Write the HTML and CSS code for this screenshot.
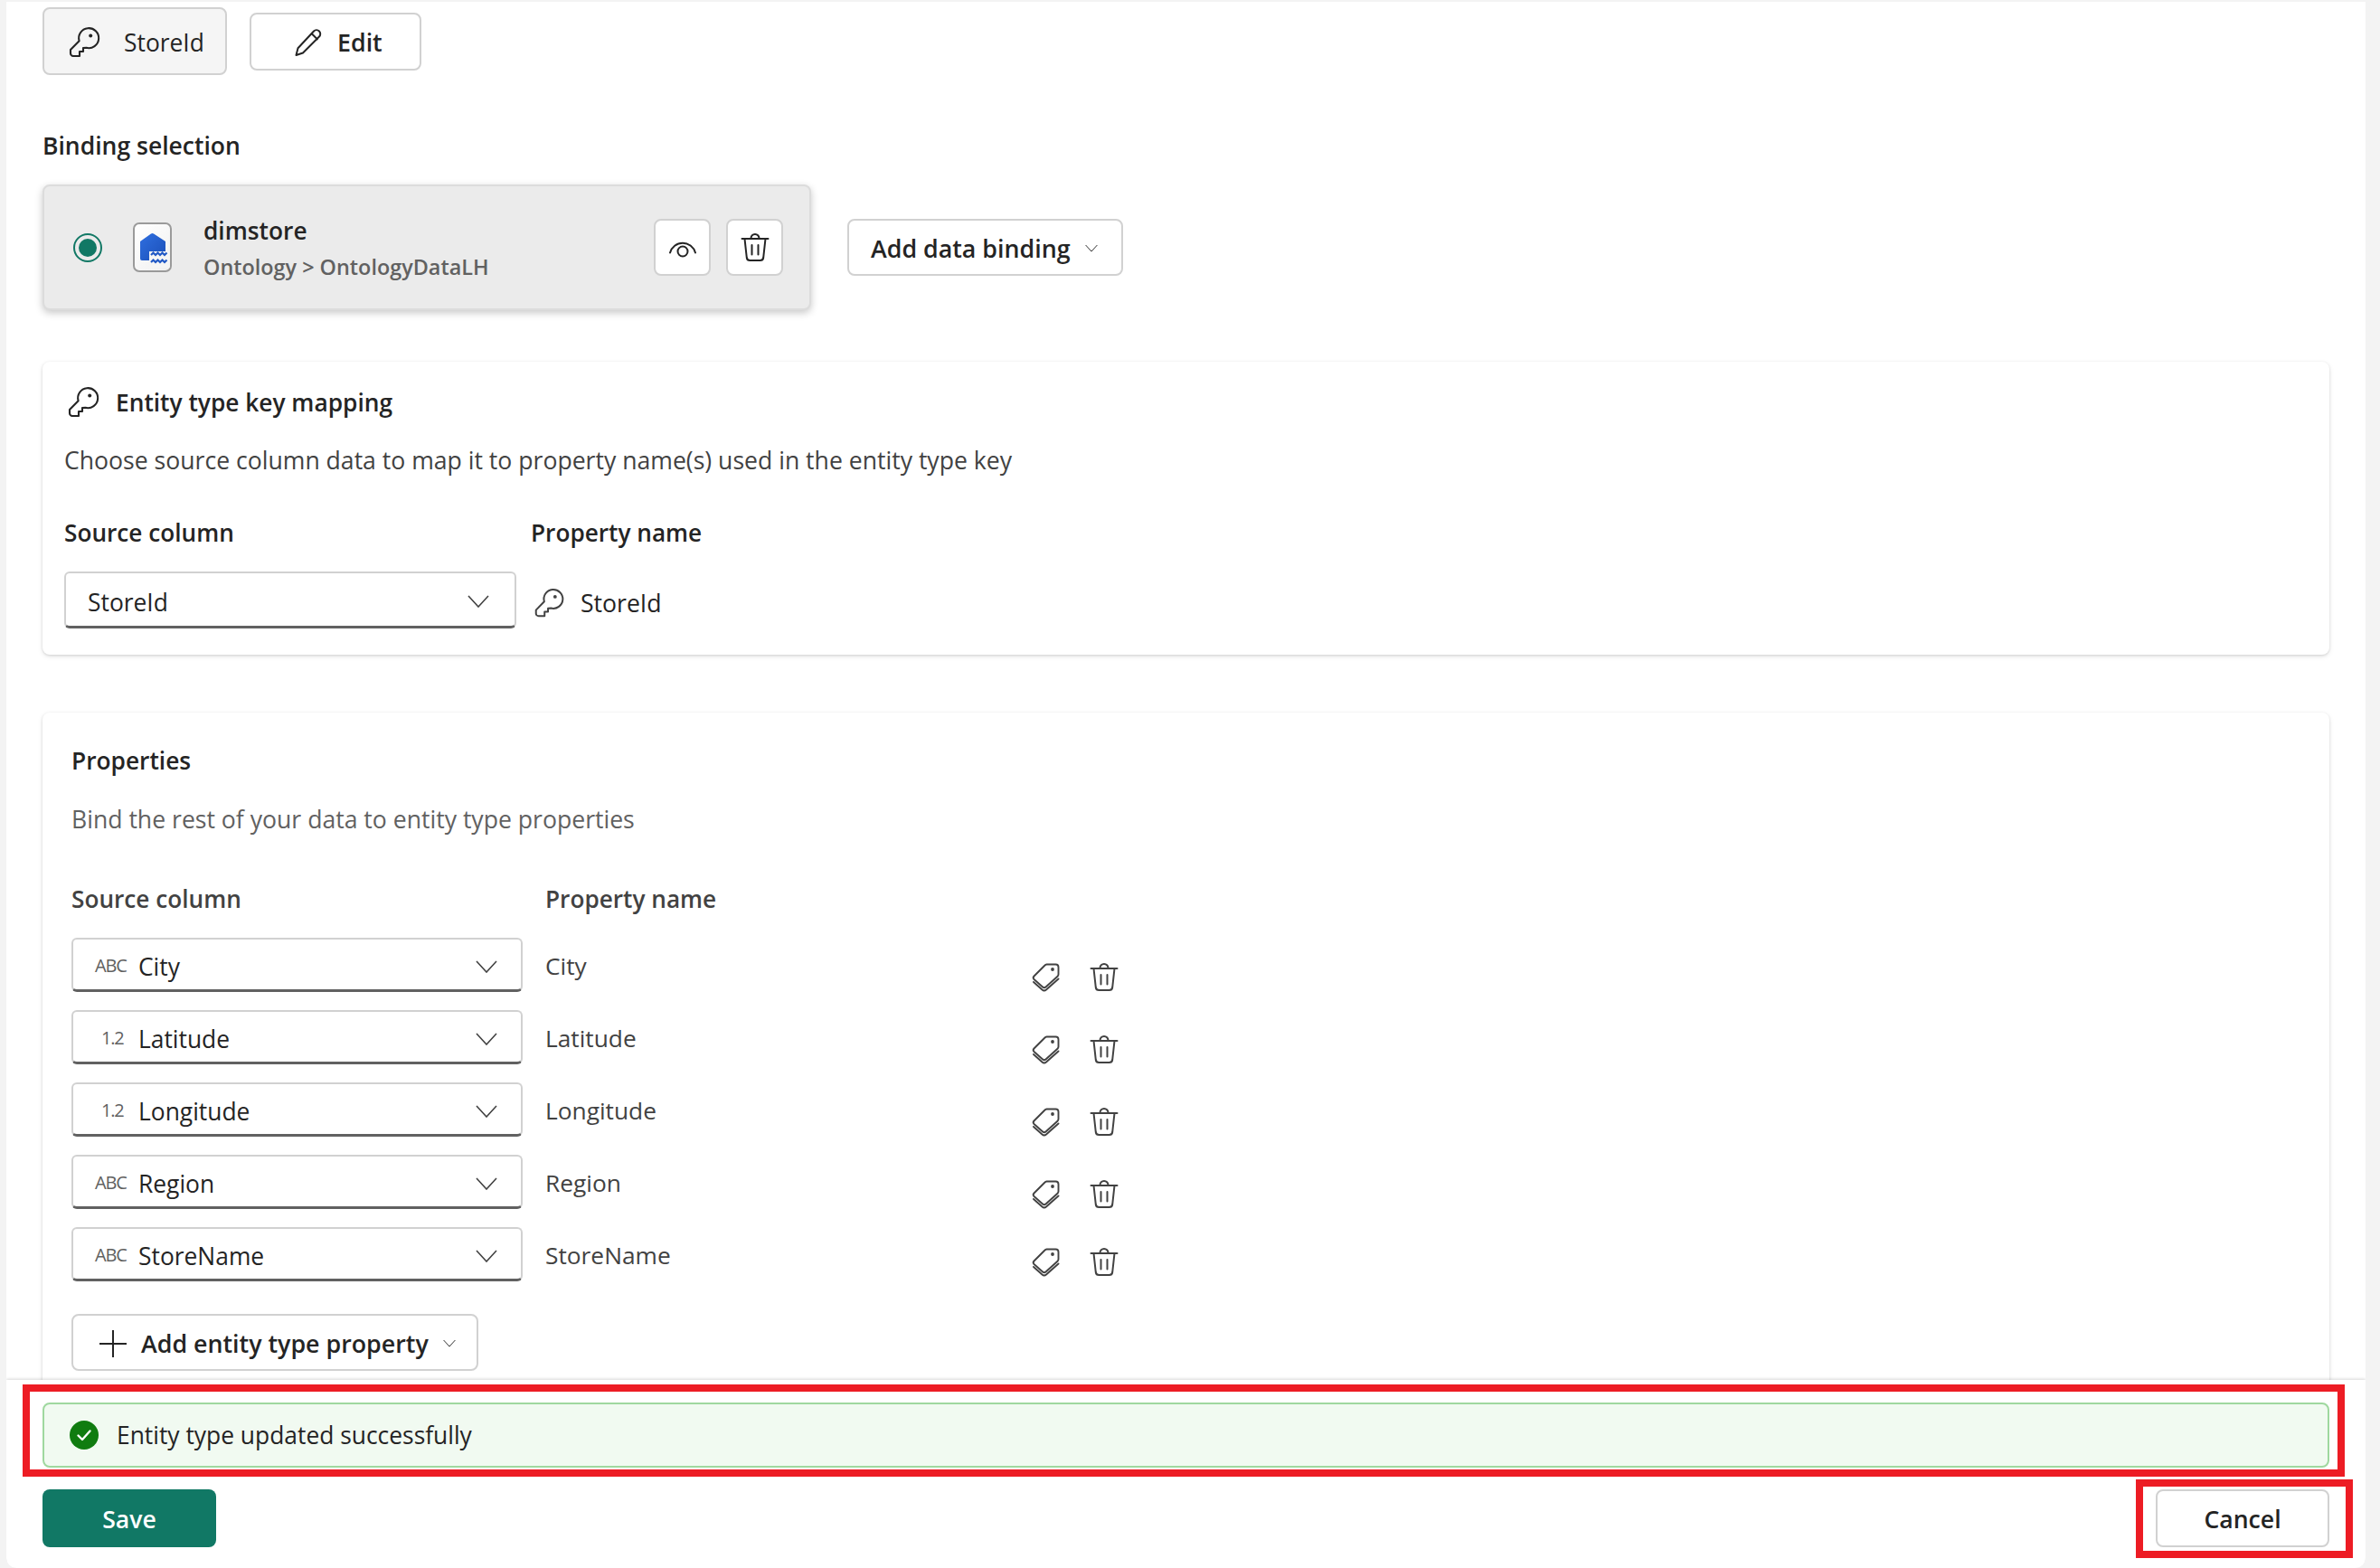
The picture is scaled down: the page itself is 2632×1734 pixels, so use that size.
FILE: index.html
```html
<!DOCTYPE html>
<html lang="en">
<head>
<meta charset="utf-8">
<title>Entity type binding</title>
<link rel="stylesheet" href="styles.css">
</head>
<body>
<svg class="defs" width="0" height="0" aria-hidden="true">
  <symbol id="key" viewBox="0 0 20 20"><path d="M7.3 9.100A5.500 5.500 0 1 1 11.200 12.900L9.500 13V15H7.500V17.500H4A1.500 1.500 0 0 1 2.500 16V14Z" fill="none" stroke="currentColor" stroke-width="1.050" stroke-linejoin="round"/><circle cx="13.600" cy="6.300" r="1" fill="currentColor"/></symbol>
  <symbol id="trash" viewBox="0 0 32 32"><g fill="none" stroke="currentColor" stroke-width="2" stroke-linecap="round" stroke-linejoin="round"><path d="M1.500 6H30.500"/><path d="M11.500 6V5.500a4.500 4.500 0 0 1 9 0V6"/><path d="M4.500 6L6.800 27a3.500 3.500 0 0 0 3.500 3H21.700a3.500 3.500 0 0 0 3.500-3L27.500 6"/><path d="M12.500 13V23.500M19.500 13V23.500"/></g></symbol>
  <symbol id="tags" viewBox="0 0 32 32"><g fill="none" stroke="currentColor" stroke-width="1.900" stroke-linecap="round" stroke-linejoin="round"><path d="M3.500 14.500 15.500 2.500a3 3 0 0 1 2-1h10a3 3 0 0 1 3 3v8a3 3 0 0 1-1 2.200L16.500 26.500a2.500 2.500 0 0 1-3.400 0L3.500 18a2.500 2.500 0 0 1 0-3.500Z"/><path d="M3 21l9.500 8.500a3.500 3.500 0 0 0 4.500 0L30.500 17.500"/></g><circle cx="24" cy="7" r="1.900" fill="currentColor"/></symbol>
  <symbol id="chev" viewBox="0 0 24 14"><path d="M1 1 12 13 23 1" fill="none" stroke="currentColor" stroke-width="1.600"/></symbol>
</svg>
<main class="panel">
  <div class="scroller">
    <div class="top-row">
      <button class="btn btn-key"><svg class="ico-key-top"><use href="#key"/></svg><span>StoreId</span></button>
      <button class="btn btn-edit">
        <svg class="ico-pencil" viewBox="0 0 32 32"><path d="M21.500 3.500a4.200 4.200 0 0 1 6 6L9.500 27.500 2 30l2-7.700ZM19 6l7 7" fill="none" stroke="currentColor" stroke-width="2" stroke-linejoin="round"/></svg>
        <span>Edit</span>
      </button>
    </div>
    <h2 class="section-label">Binding selection</h2>
    <div class="binding-row">
      <div class="binding-card">
        <span class="radio"><span class="radio-dot"></span></span>
        <span class="lake-icon">
          <svg viewBox="0 0 43 55" width="43" height="55"><defs><linearGradient id="lk" x1="0" y1="0" x2="1" y2="1"><stop offset="0" stop-color="#2f6fe0"/><stop offset="1" stop-color="#1b4fb8"/></linearGradient></defs>
            <path d="M8 21 20 12.500a2.500 2.500 0 0 1 3 0l13 8.500v21H10a2 2 0 0 1-2-2Z" fill="url(#lk)"/>
            <path d="M18 32h24v18H18Z" fill="#f5f5f5"/>
            <path d="M20 36l2.500-2.500 2.500 2.500 2.500-2.500 2.500 2.500 2.500-2.500 2.500 2.500 2.500-2.500M20 44l2.500-2.500 2.500 2.500 2.500-2.500 2.500 2.500 2.500-2.500 2.500 2.500 2.500-2.500" fill="none" stroke="#2159c6" stroke-width="2.200"/>
          </svg>
        </span>
        <span class="binding-text"><strong class="binding-name">dimstore</strong><span class="binding-path">Ontology &gt; OntologyDataLH</span></span>
        <span class="binding-actions">
          <button class="icon-btn"><svg class="ico-eye" viewBox="0 0 32 32"><g fill="none" stroke="currentColor" stroke-width="2" stroke-linecap="round"><path d="M2 21.500A14.500 14.500 0 0 1 30 21.500"/><circle cx="16" cy="20" r="5.500"/></g></svg></button>
          <button class="icon-btn"><svg class="ico-trash-lg"><use href="#trash"/></svg></button>
        </span>
      </div>
      <button class="btn btn-add-binding"><span>Add data binding</span><svg class="chev-sm"><use href="#chev"/></svg></button>
    </div>

    <section class="card key-card">
      <div class="card-head"><svg class="ico-key"><use href="#key"/></svg><h3 class="card-title">Entity type key mapping</h3></div>
      <p class="card-desc">Choose source column data to map it to property name(s) used in the entity type key</p>
      <div class="key-labels"><span class="col-label">Source column</span><span class="col-label">Property name</span></div>
      <div class="key-fields">
        <div class="select key-select"><span class="select-text">StoreId</span><svg class="chev"><use href="#chev"/></svg></div>
        <div class="key-prop"><svg class="ico-key-sm"><use href="#key"/></svg><span>StoreId</span></div>
      </div>
    </section>

    <section class="card props-card">
      <h3 class="card-title">Properties</h3>
      <p class="props-desc">Bind the rest of your data to entity type properties</p>
      <div class="props-labels"><span class="col-label-2">Source column</span><span class="col-label-2">Property name</span></div>
      <div class="rows">
        <div class="prop-row"><div class="select"><span class="type abc">ABC</span><span class="select-text">City</span><svg class="chev"><use href="#chev"/></svg></div><span class="prop-name">City</span><span class="row-actions"><svg class="ico-row"><use href="#tags"/></svg><svg class="ico-row"><use href="#trash"/></svg></span></div>
        <div class="prop-row"><div class="select"><span class="type num">1.2</span><span class="select-text">Latitude</span><svg class="chev"><use href="#chev"/></svg></div><span class="prop-name">Latitude</span><span class="row-actions"><svg class="ico-row"><use href="#tags"/></svg><svg class="ico-row"><use href="#trash"/></svg></span></div>
        <div class="prop-row"><div class="select"><span class="type num">1.2</span><span class="select-text">Longitude</span><svg class="chev"><use href="#chev"/></svg></div><span class="prop-name">Longitude</span><span class="row-actions"><svg class="ico-row"><use href="#tags"/></svg><svg class="ico-row"><use href="#trash"/></svg></span></div>
        <div class="prop-row"><div class="select"><span class="type abc">ABC</span><span class="select-text">Region</span><svg class="chev"><use href="#chev"/></svg></div><span class="prop-name">Region</span><span class="row-actions"><svg class="ico-row"><use href="#tags"/></svg><svg class="ico-row"><use href="#trash"/></svg></span></div>
        <div class="prop-row"><div class="select"><span class="type abc">ABC</span><span class="select-text">StoreName</span><svg class="chev"><use href="#chev"/></svg></div><span class="prop-name">StoreName</span><span class="row-actions last"><svg class="ico-row"><use href="#tags"/></svg><svg class="ico-row"><use href="#trash"/></svg></span></div>
      </div>
      <button class="btn btn-add-prop"><svg class="ico-plus" viewBox="0 0 30 30"><path d="M15 0V30M0 15H30" stroke="currentColor" stroke-width="2"/></svg><span>Add entity type property</span><svg class="chev-sm"><use href="#chev"/></svg></button>
    </section>
  </div>

  <footer class="footer">
    <div class="message">
      <svg class="ico-check" viewBox="0 0 32 32"><circle cx="16" cy="16" r="16" fill="#107c10"/><path d="M9.500 16.500 14 21 22.500 11.500" fill="none" stroke="#fff" stroke-width="2.400" stroke-linecap="round" stroke-linejoin="round"/></svg>
      <span>Entity type updated successfully</span>
    </div>
    <div class="footer-actions">
      <button class="btn-save">Save</button>
      <button class="btn-cancel">Cancel</button>
    </div>
    <div class="mark mark-message"></div>
    <div class="mark mark-cancel"></div>
  </footer>
</main>
</body>
</html>
```
FILE: styles.css
```css
* { box-sizing: border-box; }
html, body { margin: 0; height: 100%; }
body {
  background: #f3f3f3;
  font-family: "Open Sans", "Liberation Sans", sans-serif;
  font-size: 26.6px;
  color: #242424;
  overflow: hidden;
}
button { font: inherit; color: inherit; cursor: pointer; }
.defs { position: absolute; }
h2, h3, p { margin: 0; }

.panel {
  height: 1732px;
  margin: 2px 16px 0 7px;
  background: #fff;
  border-radius: 0 0 12px 12px;
  display: flex;
  flex-direction: column;
  overflow: hidden;
}
.scroller {
  flex: 1;
  min-height: 0;
  overflow: hidden;
  padding: 6px 40px 0 40px;
}

.btn {
  display: inline-flex;
  align-items: center;
  background: #fff;
  border: 2px solid #d1d1d1;
  border-radius: 8px;
  padding: 2px 0 0;
  font-size: 26.8px;
  font-weight: 600;
  line-height: 36px;
}
.top-row { display: flex; align-items: center; gap: 25px; height: 75px; }
.btn-key { width: 204px; height: 75px; background: #f5f5f5; padding-left: 24px; gap: 24px; font-size: 26.4px; font-weight: 400; }
.ico-key-top { width: 40px; height: 40px; }
.btn-edit { width: 190px; height: 64px; padding-left: 47px; gap: 15px; }
.ico-pencil { width: 33px; height: 32px; }

.section-label { margin-top: 60px; margin-bottom: -1px; font-size: 26.500px; font-weight: 600; line-height: 36px; }

.binding-row { display: flex; align-items: center; gap: 40px; margin-top: 26px; }
.binding-card {
  width: 850px;
  height: 139px;
  display: flex;
  align-items: center;
  background: #ebebeb;
  border: 2px solid #dcdcdc;
  border-radius: 8px;
  box-shadow: 0 3px 8px rgba(0,0,0,.22);
  padding-left: 32px;
}
.radio {
  width: 32px; height: 32px;
  border: 2px solid #117865;
  border-radius: 50%;
  display: flex; align-items: center; justify-content: center;
}
.radio-dot { width: 20px; height: 20px; border-radius: 50%; background: #117865; }
.lake-icon {
  width: 43px; height: 55px;
  margin-left: 34px;
  background: linear-gradient(135deg, #fff, #f0f0f0);
  border: 2px solid #9a9a9a;
  border-radius: 7px;
  overflow: hidden;
  display: block;
}
.lake-icon svg { display: block; margin: -2px; }
.binding-text { display: flex; flex-direction: column; margin-left: 35px; flex: 1; padding-top: 2px; }
.binding-name { font-weight: 600; font-size: 26.300px; line-height: 36px; }
.binding-path { font-size: 23.400px; font-weight: 600; color: #616161; line-height: 36px; margin-top: 4px; }
.binding-actions { display: flex; gap: 17px; margin-right: 29px; }
.icon-btn {
  width: 63px; height: 63px;
  background: #fff;
  border: 2px solid #d1d1d1;
  border-radius: 8px;
  display: flex; align-items: center; justify-content: center;
  padding: 0;
}
.ico-eye { width: 32px; height: 32px; }
.ico-trash-lg { width: 32px; height: 32px; }
.btn-add-binding { width: 305px; height: 63px; padding-left: 24px; gap: 16px; }
.chev-sm { width: 14px; height: 9px; }

.card {
  background: #fff;
  border-radius: 8px;
  box-shadow: 0 1px 3px rgba(0,0,0,.14), 0 2px 6px rgba(0,0,0,.08);
  width: 2529px;
}
.key-card { margin-top: 57px; height: 324px; padding: 28px 24px 0; }
.card-head { display: flex; align-items: center; height: 34px; gap: 16px; }
.ico-key { width: 40px; height: 40px; flex: none; margin-left: 1px; }
.card-title { font-size: 26.300px; font-weight: 600; line-height: 34px; }
.card-desc { margin-top: 29px; line-height: 36px; color: #424242; }
.key-labels { display: flex; margin-top: 44px; line-height: 36px; }
.col-label { width: 516px; font-size: 26.200px; font-weight: 600; }
.key-fields { display: flex; align-items: center; margin-top: 25px; }

.select {
  height: 60px;
  width: 499px;
  flex: none;
  display: flex;
  align-items: center;
  background: #fff;
  border: 2px solid #d1d1d1;
  border-bottom: 3px solid #616161;
  border-radius: 6px;
  padding: 0 26px 0 24px;
  line-height: 36px;
}
.select-text { flex: 1; padding-top: 5px; font-size: 26.400px; }
.key-select { width: 500px; height: 63px; padding-right: 28px; }
.chev { width: 24px; height: 14px; color: #424242; flex: none; margin-top: 4px; }
.key-prop { display: flex; align-items: center; gap: 16px; margin-left: 17px; padding-top: 6px; line-height: 36px; }
.ico-key-sm { width: 38px; height: 38px; color: #424242; }

.props-card { margin-top: 64px; height: 760px; padding: 35px 32px 0; }
.props-card .card-title { line-height: 36px; }
.props-desc { margin-top: 29px; line-height: 36px; color: #616161; }
.props-labels { display: flex; margin-top: 52px; line-height: 36px; }
.col-label-2 { width: 524px; font-size: 26.200px; font-weight: 600; color: #424242; }
.rows { display: flex; flex-direction: column; gap: 21px; margin-top: 25px; }
.prop-row { display: flex; align-items: flex-start; height: 59px; }
.type { width: 48px; flex: none; font-size: 20px; color: #616161; letter-spacing: -1.200px; padding-top: 2px; }
.type.num { padding-left: 7px; }
.prop-name { width: 537px; margin-left: 25px; line-height: 36px; padding-top: 13px; color: #424242; font-size: 26.300px; }
.row-actions { display: flex; gap: 33px; margin-top: 28px; color: #424242; }
.row-actions.last { margin-top: 23px; }
.ico-row { width: 32px; height: 32px; }
.btn-add-prop { width: 450px; height: 63px; margin-top: 37px; padding-left: 29px; gap: 16px; }
.ico-plus { width: 30px; height: 30px; }

.footer {
  flex: none;
  height: 208px;
  position: relative;
  background: #fff;
  padding: 25px 40px 0 40px;
  box-shadow: 0 -1px 3px rgba(0,0,0,.16);
  z-index: 1;
}
.message {
  height: 72px;
  display: flex;
  align-items: center;
  gap: 20px;
  background: #f1faf1;
  border: 2px solid #9fd89f;
  border-radius: 8px;
  padding-left: 28px;
  font-size: 26.400px;
}
.ico-check { width: 32px; height: 32px; flex: none; }
.footer-actions { display: flex; justify-content: space-between; margin-top: 24px; }
.btn-save {
  width: 192px; height: 64px;
  background: #117865;
  color: #fff;
  border: 0;
  border-radius: 8px;
  font-weight: 600;
  padding-top: 2px;
}
.btn-cancel {
  width: 192px; height: 64px;
  background: #fff;
  border: 2px solid #d1d1d1;
  border-radius: 8px;
  font-weight: 600;
  padding-top: 2px;
}
.mark { position: absolute; border: 8px solid #ed1c24; pointer-events: none; }
.mark-message { left: 18px; top: 5px; width: 2568px; height: 102px; }
.mark-cancel { left: 2355px; top: 110px; width: 240px; height: 87px; }
```
